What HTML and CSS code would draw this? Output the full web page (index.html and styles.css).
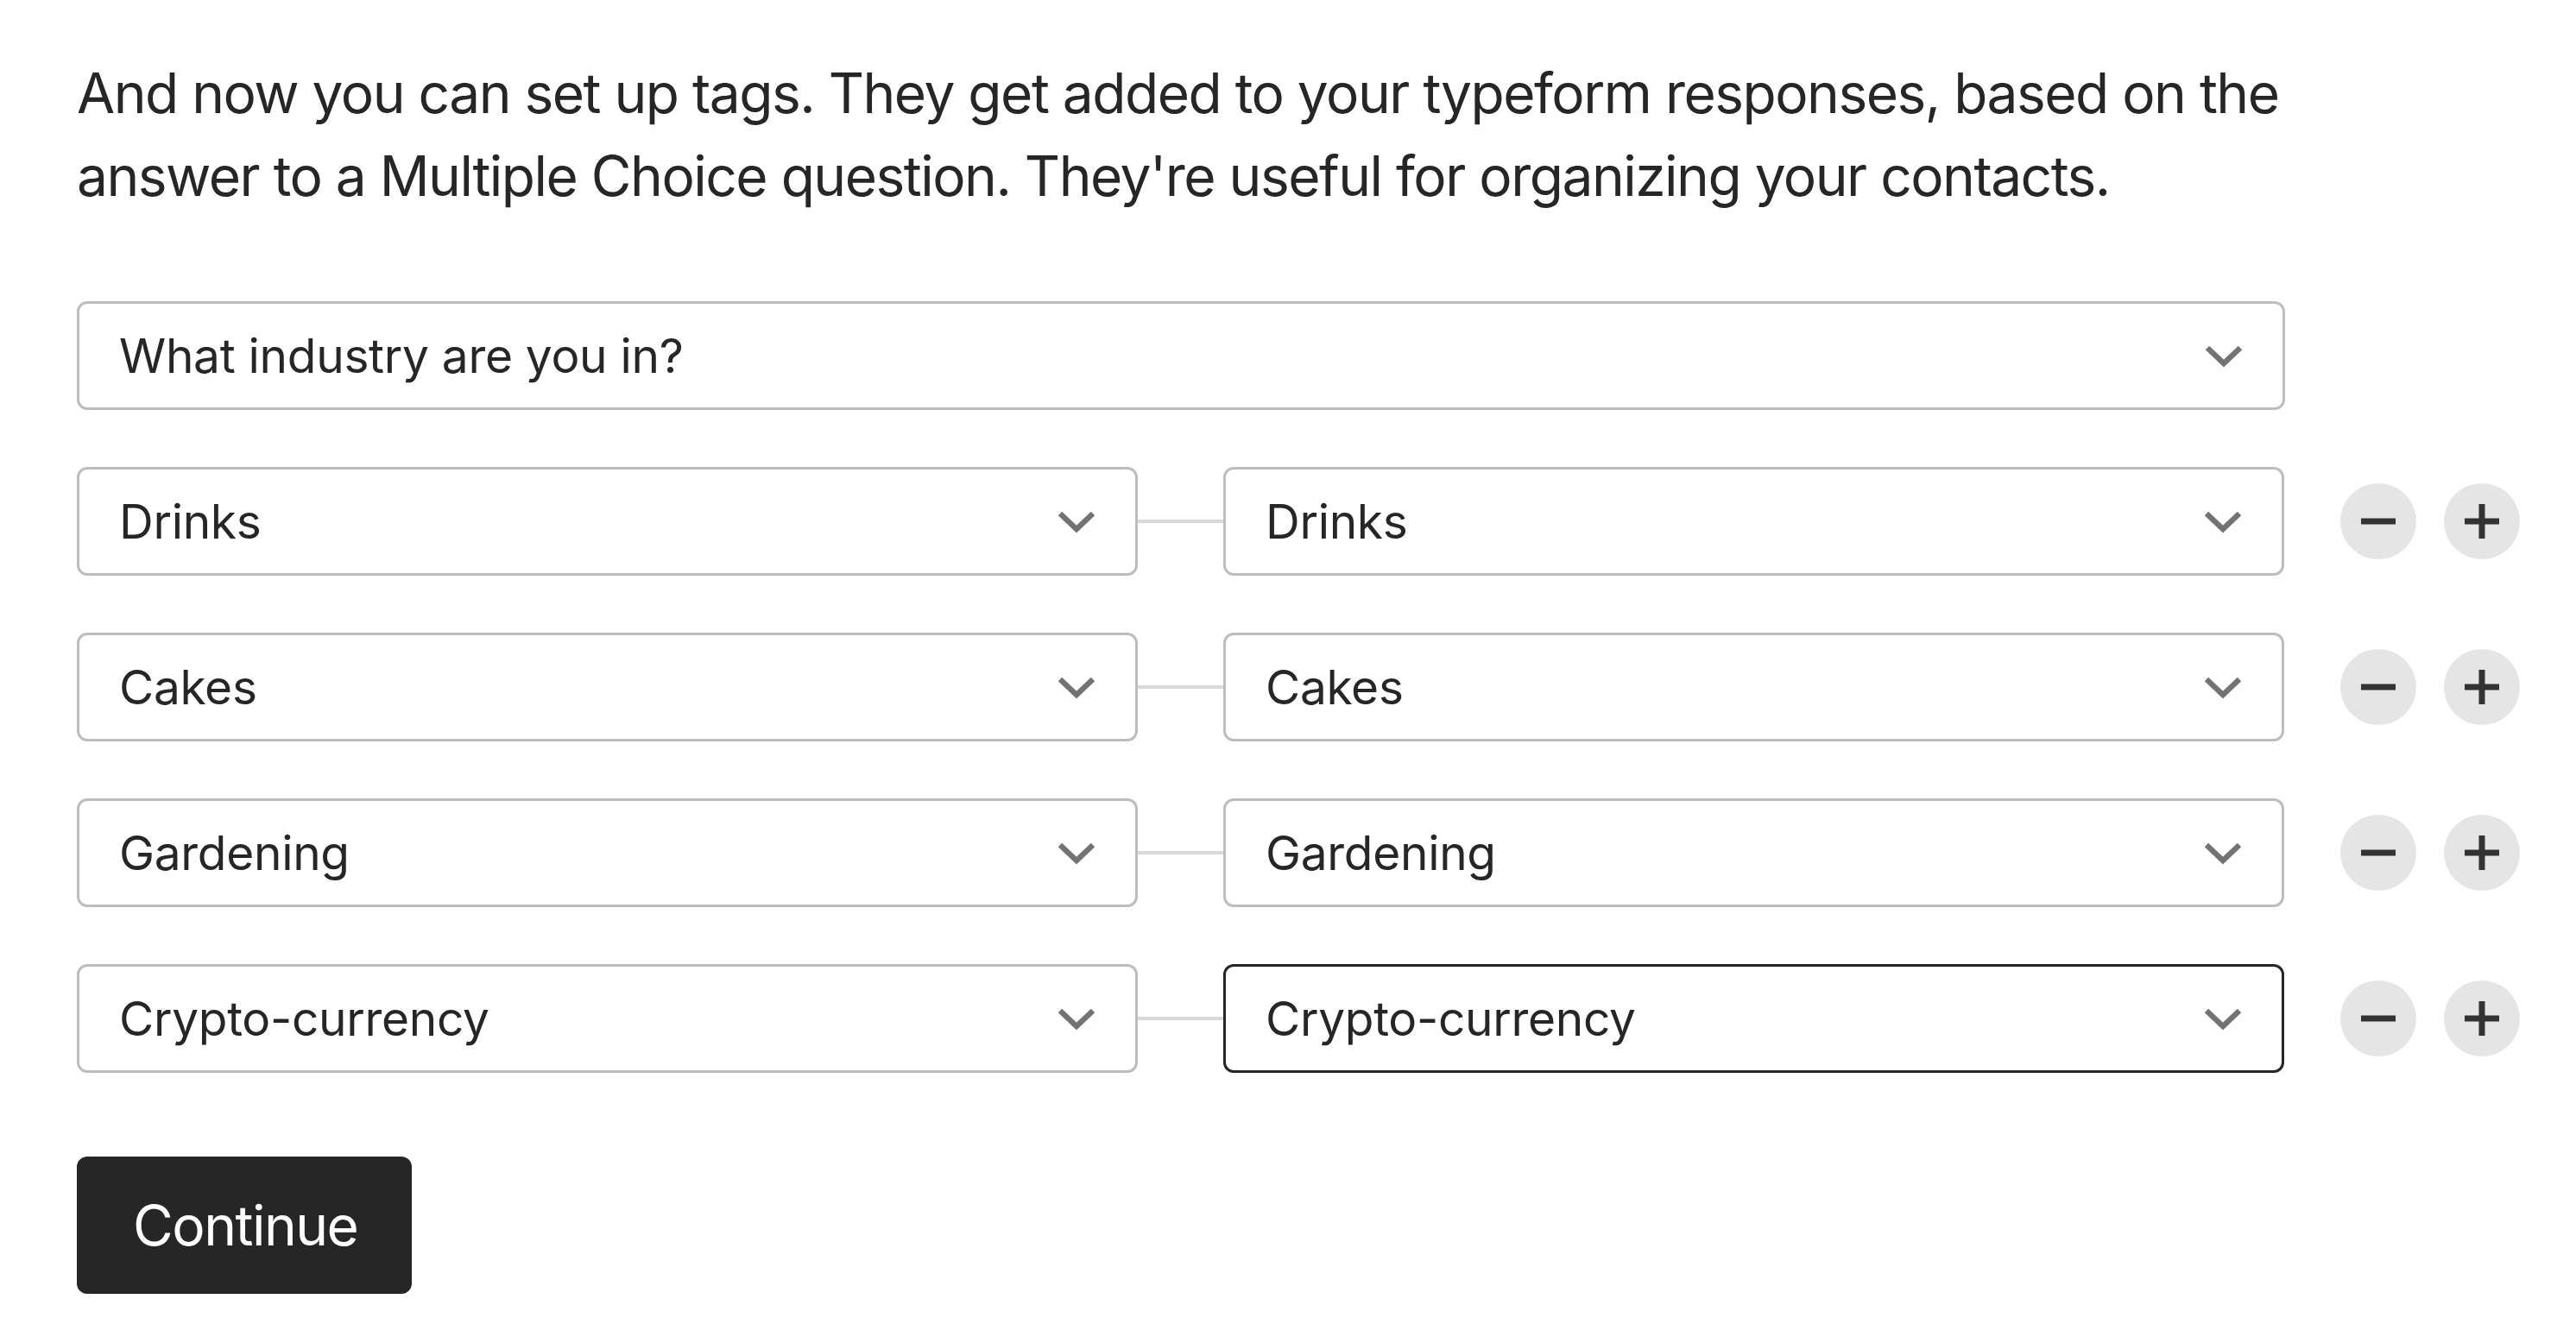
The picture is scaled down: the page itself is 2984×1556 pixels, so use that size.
FILE: index.html
```html
<!DOCTYPE html>
<html lang="en">
<head>
<meta charset="utf-8">
<title>Tags</title>
<link rel="stylesheet" href="styles.css">
</head>
<body>
<main class="page">
  <p class="intro">And now you can set up tags. They get added to your typeform responses, based on the answer to a Multiple Choice question. They're useful for organizing your contacts.</p>

  <div class="form">
    <div class="select select-wide">
      <span class="select-label">What industry are you in?</span>
      <svg class="chevron" viewBox="0 0 44 25" width="44" height="25"><polyline points="3,3 22,21 41,3"/></svg>
    </div>

    <div class="row">
      <div class="select"><span class="select-label">Drinks</span><svg class="chevron" viewBox="0 0 44 25" width="44" height="25"><polyline points="3,3 22,21 41,3"/></svg></div>
      <div class="connector"></div>
      <div class="select"><span class="select-label">Drinks</span><svg class="chevron" viewBox="0 0 44 25" width="44" height="25"><polyline points="3,3 22,21 41,3"/></svg></div>
      <div class="actions">
        <button class="round" type="button" aria-label="Remove"><svg viewBox="0 0 40 40" width="40" height="40"><line x1="1" y1="20" x2="39" y2="20"/></svg></button>
        <button class="round" type="button" aria-label="Add"><svg viewBox="0 0 40 40" width="40" height="40"><line x1="1" y1="20" x2="39" y2="20"/><line x1="20" y1="1" x2="20" y2="39"/></svg></button>
      </div>
    </div>

    <div class="row">
      <div class="select"><span class="select-label">Cakes</span><svg class="chevron" viewBox="0 0 44 25" width="44" height="25"><polyline points="3,3 22,21 41,3"/></svg></div>
      <div class="connector"></div>
      <div class="select"><span class="select-label">Cakes</span><svg class="chevron" viewBox="0 0 44 25" width="44" height="25"><polyline points="3,3 22,21 41,3"/></svg></div>
      <div class="actions">
        <button class="round" type="button" aria-label="Remove"><svg viewBox="0 0 40 40" width="40" height="40"><line x1="1" y1="20" x2="39" y2="20"/></svg></button>
        <button class="round" type="button" aria-label="Add"><svg viewBox="0 0 40 40" width="40" height="40"><line x1="1" y1="20" x2="39" y2="20"/><line x1="20" y1="1" x2="20" y2="39"/></svg></button>
      </div>
    </div>

    <div class="row">
      <div class="select"><span class="select-label">Gardening</span><svg class="chevron" viewBox="0 0 44 25" width="44" height="25"><polyline points="3,3 22,21 41,3"/></svg></div>
      <div class="connector"></div>
      <div class="select"><span class="select-label">Gardening</span><svg class="chevron" viewBox="0 0 44 25" width="44" height="25"><polyline points="3,3 22,21 41,3"/></svg></div>
      <div class="actions">
        <button class="round" type="button" aria-label="Remove"><svg viewBox="0 0 40 40" width="40" height="40"><line x1="1" y1="20" x2="39" y2="20"/></svg></button>
        <button class="round" type="button" aria-label="Add"><svg viewBox="0 0 40 40" width="40" height="40"><line x1="1" y1="20" x2="39" y2="20"/><line x1="20" y1="1" x2="20" y2="39"/></svg></button>
      </div>
    </div>

    <div class="row">
      <div class="select"><span class="select-label">Crypto-currency</span><svg class="chevron" viewBox="0 0 44 25" width="44" height="25"><polyline points="3,3 22,21 41,3"/></svg></div>
      <div class="connector"></div>
      <div class="select select-focused"><span class="select-label">Crypto-currency</span><svg class="chevron" viewBox="0 0 44 25" width="44" height="25"><polyline points="3,3 22,21 41,3"/></svg></div>
      <div class="actions">
        <button class="round" type="button" aria-label="Remove"><svg viewBox="0 0 40 40" width="40" height="40"><line x1="1" y1="20" x2="39" y2="20"/></svg></button>
        <button class="round" type="button" aria-label="Add"><svg viewBox="0 0 40 40" width="40" height="40"><line x1="1" y1="20" x2="39" y2="20"/><line x1="20" y1="1" x2="20" y2="39"/></svg></button>
      </div>
    </div>
  </div>

  <button class="continue" type="button">Continue</button>
</main>
</body>
</html>
```

FILE: styles.css
```css
* { box-sizing: border-box; }

html, body {
  margin: 0;
  background: #ffffff;
}

body {
  font-family: Inter, "Liberation Sans", Arial, sans-serif;
  color: #262626;
}

.page {
  padding: 60px 0 0 89px;
}

.intro {
  margin: 0;
  width: 2600px;
  font-size: 64px;
  line-height: 96px;
  letter-spacing: -1.5px;
}

.form {
  margin-top: 97px;
  display: flex;
  flex-direction: column;
  gap: 66px;
}

.select {
  width: 1229px;
  height: 126px;
  border: 3px solid #bdbdbd;
  border-radius: 12px;
  padding: 0 46px 0 46px;
  display: flex;
  align-items: center;
  justify-content: space-between;
  font-size: 55px;
  letter-spacing: -0.3px;
  background: #ffffff;
}

.select-wide {
  width: 2558px;
}

.select-focused {
  border-color: #262626;
}

.chevron {
  flex: none;
  fill: none;
  stroke: #737373;
  stroke-width: 6.5;
}

.row {
  display: flex;
  align-items: center;
}

.connector {
  width: 99px;
  height: 4px;
  background: #d9d9d9;
}

.actions {
  display: flex;
  gap: 32px;
  margin-left: 65px;
}

.round {
  width: 88px;
  height: 88px;
  border: none;
  border-radius: 50%;
  background: #e5e5e5;
  padding: 0;
  display: flex;
  align-items: center;
  justify-content: center;
}

.round svg {
  stroke: #333333;
  stroke-width: 7;
  stroke-linecap: round;
}

.continue {
  margin-top: 97px;
  height: 159px;
  padding: 0 63px 0 65px;
  border: none;
  border-radius: 12px;
  background: #262626;
  color: #ffffff;
  font-family: Inter, "Liberation Sans", Arial, sans-serif;
  font-size: 64px;
  letter-spacing: -1.5px;
}
```
